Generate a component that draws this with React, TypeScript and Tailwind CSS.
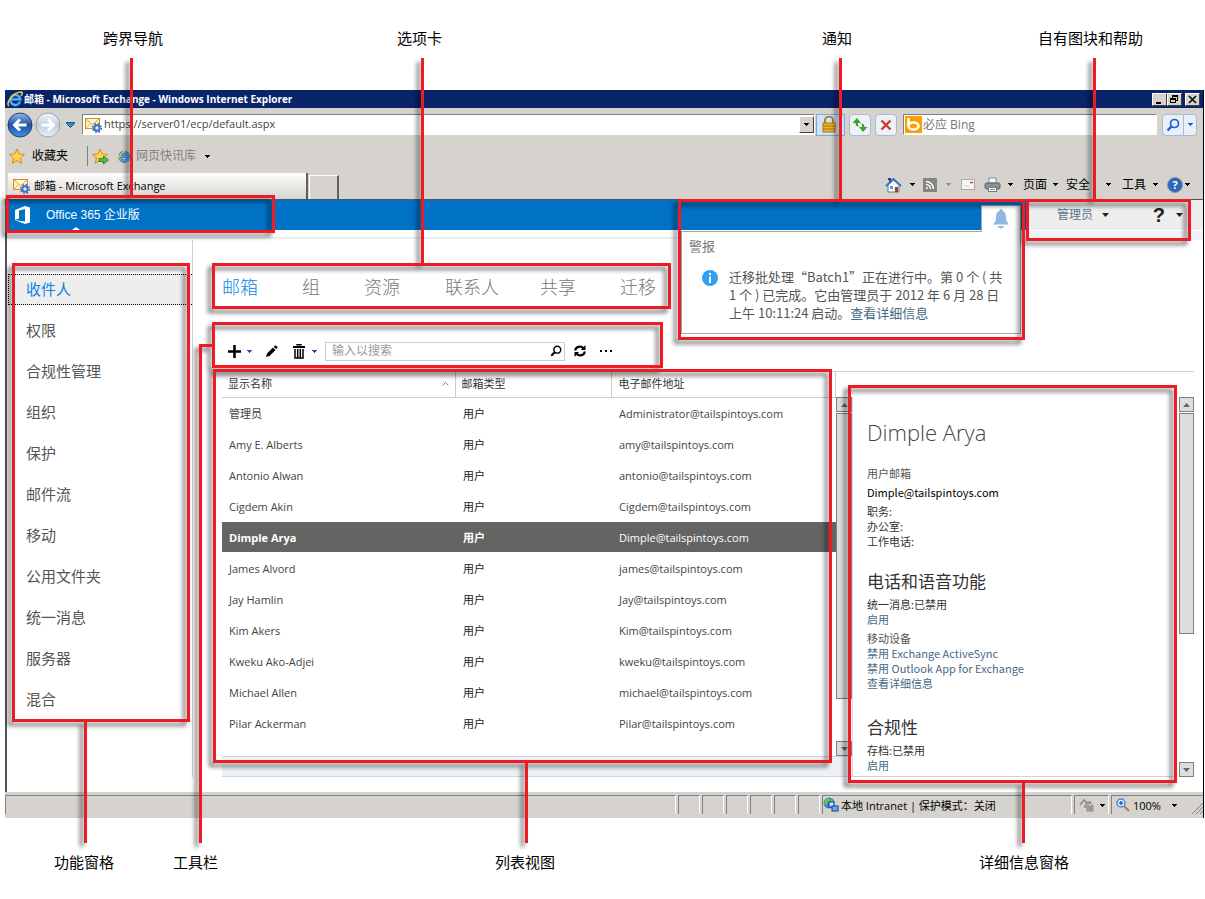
import type { ReactNode } from 'react';

const NAV_ITEMS = ['收件人', '权限', '合规性管理', '组织', '保护', '邮件流', '移动', '公用文件夹', '统一消息', '服务器', '混合'];

const TABS = [
  { label: '邮箱', width: 'w-20' },
  { label: '组', width: 'w-[62px]' },
  { label: '资源', width: 'w-[81px]' },
  { label: '联系人', width: 'w-[95px]' },
  { label: '共享', width: 'w-20' },
  { label: '迁移', width: 'w-10' },
];

const MAILBOXES = [
  { name: '管理员', email: 'Administrator@tailspintoys.com' },
  { name: 'Amy E. Alberts', email: 'amy@tailspintoys.com' },
  { name: 'Antonio Alwan', email: 'antonio@tailspintoys.com' },
  { name: 'Cigdem Akin', email: 'Cigdem@tailspintoys.com' },
  { name: 'Dimple Arya', email: 'Dimple@tailspintoys.com', selected: true },
  { name: 'James Alvord', email: 'james@tailspintoys.com' },
  { name: 'Jay Hamlin', email: 'Jay@tailspintoys.com' },
  { name: 'Kim Akers', email: 'Kim@tailspintoys.com' },
  { name: 'Kweku Ako-Adjei', email: 'kweku@tailspintoys.com' },
  { name: 'Michael Allen', email: 'michael@tailspintoys.com' },
  { name: 'Pilar Ackerman', email: 'Pilar@tailspintoys.com' },
];

function Caret({ className = 'text-black' }: { className?: string }) {
  return (
    <svg viewBox="0 0 5 3" className={`w-[5px] h-[3px] shrink-0 ${className}`} fill="currentColor" shapeRendering="crispEdges">
      <path d="M0 0h5L2.500 3z" />
    </svg>
  );
}

function IeIcon({ className }: { className: string }) {
  return (
    <svg viewBox="0 0 16 16" className={className} fill="none">
      <path d="M13 10.700A5 5 0 1 1 13.300 8.300H4" stroke="#1668c4" strokeWidth="3.400" />
      <path d="M13 10.700A5 5 0 1 1 13.300 8.300H4" stroke="#5db4f5" strokeWidth="1.800" />
      <path d="M2 15C-1.500 12 6 1 14.500 1c1.500.5.5 2.500-.5 4" stroke="#f5c542" strokeWidth="1.500" />
    </svg>
  );
}

function MailGearIcon() {
  return (
    <svg viewBox="0 0 17 16" className="w-[17px] h-4 shrink-0">
      <rect x="0.500" y="1.500" width="14" height="10" fill="#fdeebb" stroke="#c9922a" />
      <path d="M1 2l6.500 5.500L14 2" fill="#fff8dc" stroke="#d9a441" />
      <path d="M1 11l4.500-4.500M14 11L9.500 6.500" fill="none" stroke="#e2bd6a" />
      <circle cx="12" cy="11" r="4.300" fill="none" stroke="#2a5db0" strokeWidth="1.400" strokeDasharray="1.700 1.700" />
      <circle cx="12" cy="11" r="2.700" fill="#dbe8fb" stroke="#3f74c8" strokeWidth="2" />
    </svg>
  );
}

function Star({ arrow }: { arrow?: boolean }) {
  return (
    <svg viewBox="0 0 17 17" className="w-[17px] h-[17px] shrink-0">
      <path d="M8 1l2.200 4.900 5.300.5-4 3.600 1.200 5.300L8 12.500l-4.700 2.800L4.500 10l-4-3.600 5.300-.5z" fill="#ffd34d" stroke="#d98a1b" />
      {arrow && <path d="M7 10.500h4.500V8l5 4-5 4v-2.500H7z" fill="#4cc24c" stroke="#1e7d25" strokeWidth="0.800" />}
    </svg>
  );
}

function NavArrow({ forward }: { forward?: boolean }) {
  return (
    <svg viewBox="0 0 26 26" className="w-[26px] h-[26px]">
      <defs>
        <linearGradient id={forward ? 'fwd' : 'back'} x1="0" y1="0" x2="0" y2="1">
          <stop offset="0" stopColor={forward ? '#f5f8fc' : '#8fbdf0'} />
          <stop offset="0.500" stopColor={forward ? '#c3cedd' : '#1d4f9c'} />
          <stop offset="1" stopColor={forward ? '#e8eef7' : '#3f94e8'} />
        </linearGradient>
      </defs>
      <circle cx="13" cy="13" r="12" fill={forward ? 'url(#fwd)' : 'url(#back)'} stroke={forward ? '#98a4b5' : '#27406b'} />
      {forward
        ? <path d="M6.500 13h11M13 7.500l5.500 5.500-5.500 5.500" fill="none" stroke="#fff" strokeWidth="3" />
        : <path d="M19.500 13h-11M13 7.500L7.500 13l5.500 5.500" fill="none" stroke="#fff" strokeWidth="3" />}
    </svg>
  );
}

function Magnifier({ className, color }: { className: string; color: string }) {
  return (
    <svg viewBox="0 0 14 14" className={className} fill="none" stroke={color}>
      <circle cx="8.500" cy="5.500" r="4" strokeWidth="1.700" />
      <path d="M5.800 8.200L1.500 12.500" strokeWidth="2.400" />
    </svg>
  );
}

function CaptionButton({ label, children }: { label: string; children: ReactNode }) {
  return (
    <button aria-label={label} className="w-[15px] h-[13px] bg-[#d6d3ce] border border-t-white border-l-white border-r-[#404040] border-b-[#404040]">
      <svg viewBox="0 0 13 11" className="w-[13px] h-[11px]" fill="none" stroke="#000" shapeRendering="crispEdges">{children}</svg>
    </button>
  );
}

function TitleBar() {
  return (
    <div className="h-[18px] bg-[#0a246a] flex items-center pl-[2px] pr-[3px] border-r border-black">
      <IeIcon className="w-4 h-4" />
      <h1 className="flex-1 ml-px text-white text-[10px] font-bold leading-4 whitespace-nowrap">邮箱 - Microsoft Exchange - Windows Internet Explorer</h1>
      <CaptionButton label="最小化"><path d="M3 8.500h5" strokeWidth="2" /></CaptionButton>
      <CaptionButton label="还原">
        <path d="M4.500 4V1.500h5v5H8M4 2h6M2.500 4.500h5v4h-5zM2 5h6" />
      </CaptionButton>
      <span className="w-[3px]" />
      <CaptionButton label="关闭"><path d="M3 2l7 7M10 2L3 9" strokeWidth="1.500" shapeRendering="auto" /></CaptionButton>
    </div>
  );
}

function AddressRow() {
  return (
    <div className="h-[33px] flex items-center pl-[2px] pr-[6px]">
      <button aria-label="后退"><NavArrow /></button>
      <button aria-label="前进" className="ml-[2px]"><NavArrow forward /></button>
      <svg viewBox="0 0 9 6" className="w-[9px] h-[6px] mx-[5px]"><path d="M.5.5h8v1L4.500 5.500.5 1.500z" fill="#2d8fd6" stroke="#174f8a" /></svg>
      <div className="flex-1 h-[21px] ml-[2px] bg-white border border-[#808080] border-r-white border-b-white flex items-center pl-[2px]">
        <MailGearIcon />
        <input aria-label="地址" defaultValue="https://server01/ecp/default.aspx" className="flex-1 min-w-0 ml-[2px] text-[11px] text-[#444] outline-none" />
        <button aria-label="地址列表" className="w-[15px] h-[17px] bg-[#d6d3ce] border border-t-white border-l-white border-r-[#404040] border-b-[#404040] flex items-center justify-center">
          <Caret />
        </button>
      </div>
      <button aria-label="安全报告" className="w-[29px] h-[22px] ml-px bg-[#cfe3fb] border border-[#7da7d9] flex items-center justify-center">
        <svg viewBox="0 0 14 17" className="w-[14px] h-[17px] mr-1">
          <path d="M3 8V4.500a4 4 0 0 1 8 0V8" fill="none" stroke="#a8832a" strokeWidth="2" />
          <rect x="1" y="7" width="12" height="9" fill="#eeb422" stroke="#a8780f" />
          <path d="M1 10h12M1 13h12" stroke="#a8780f" />
        </svg>
      </button>
      <button aria-label="刷新" className="w-[22px] h-[22px] ml-1 bg-[#eef1f8] border border-[#b0b8c8] rounded-sm flex items-center justify-center">
        <svg viewBox="0 0 16 14" className="w-4 h-[14px]" fill="#35a52d">
          <path d="M5 0L.5 5h3c0 2.500 1.200 3.600 3.500 3.600C6 7.600 6 6.500 6 5h3zM11 14l4.500-5h-3c0-2.500-1.200-3.600-3.500-3.600 1 1 1 2.100 1 3.600H7z" />
        </svg>
      </button>
      <button aria-label="停止" className="w-[22px] h-[22px] ml-1 bg-[#eef1f8] border border-[#b0b8c8] rounded-sm flex items-center justify-center">
        <svg viewBox="0 0 12 12" className="w-3 h-3" stroke="#cc3a33" strokeWidth="2.400"><path d="M1.500 1.500l9 9M10.500 1.500l-9 9" /></svg>
      </button>
      <div className="w-[254px] h-[21px] ml-[6px] bg-white border border-[#808080] border-r-white border-b-white flex items-center pl-px">
        <svg viewBox="0 0 17 17" className="w-[17px] h-[17px]">
          <rect width="17" height="17" fill="#ff9c00" />
          <path d="M3.500 2v8" stroke="#fff" strokeWidth="2.600" />
          <ellipse cx="8.500" cy="10" rx="5" ry="3.500" fill="none" stroke="#fff" strokeWidth="2.600" />
        </svg>
        <input aria-label="搜索 Bing" placeholder="必应 Bing" className="flex-1 min-w-0 ml-px text-xs placeholder:text-[#777] outline-none" />
      </div>
      <button aria-label="搜索" className="w-[22px] h-[22px] ml-[5px] bg-[#e8f0fb] border border-[#b0b8c8] rounded-l-sm flex items-center justify-center">
        <Magnifier className="w-[14px] h-[14px]" color="#1f5fd0" />
      </button>
      <button aria-label="搜索选项" className="w-[13px] h-[22px] bg-[#e8f0fb] border border-l-0 border-[#b0b8c8] rounded-r-sm flex items-center justify-center">
        <Caret className="text-[#1f5fd0]" />
      </button>
    </div>
  );
}

function FavoritesRow() {
  return (
    <div className="h-[30px] flex items-center pl-[4px] text-xs">
      <button className="flex items-center gap-[6px]"><Star />收藏夹</button>
      <span className="w-px h-5 bg-[#808080] ml-[19px] mr-1" />
      <button aria-label="添加到收藏夹"><Star arrow /></button>
      <button className="flex items-center gap-[5px] ml-2 text-[#808080]">
        <IeIcon className="w-[14px] h-[14px]" />
        网页快讯库
        <Caret className="text-black ml-1" />
      </button>
    </div>
  );
}

function CommandBar() {
  return (
    <div className="flex items-center text-xs pr-[13px] pb-px">
      <button aria-label="主页" className="flex items-center gap-2">
        <svg viewBox="0 0 17 16" className="w-[17px] h-4">
          <path d="M3 2h2v3" fill="none" stroke="#27408b" strokeWidth="2" />
          <path d="M3 8v7h11V8L8.500 3z" fill="#f4f7fb" stroke="#5c79a8" />
          <path d="M1 9l7.500-7L16 9" fill="none" stroke="#3d6fb5" strokeWidth="1.800" />
          <rect x="5" y="9" width="3" height="3" fill="#6e93c4" /><rect x="10" y="10" width="3" height="5" fill="#8a4b22" />
        </svg>
        <Caret />
      </button>
      <button aria-label="源" className="flex items-center gap-[9px] ml-2">
        <svg viewBox="0 0 14 14" className="w-[14px] h-[14px]" fill="none" stroke="#fff" strokeWidth="1.500">
          <rect width="14" height="14" rx="1" fill="#858585" stroke="none" />
          <circle cx="4" cy="10" r="1" fill="#fff" stroke="none" /><path d="M3 6.500a4.500 4.500 0 0 1 4.500 4.500M3 3.500a7.500 7.500 0 0 1 7.500 7.500" />
        </svg>
        <Caret className="text-[#909090]" />
      </button>
      <button aria-label="阅读邮件" className="ml-[10px]">
        <svg viewBox="0 0 14 11" className="w-[14px] h-[11px]"><rect x=".5" y=".5" width="13" height="10" fill="#f6f6f6" stroke="#aaa" /><path d="M9 3.500h3" stroke="#d33" strokeWidth="1.500" /><path d="M3 7h5" stroke="#ccc" /></svg>
      </button>
      <button aria-label="打印" className="flex items-center gap-[7px] ml-[9px]">
        <svg viewBox="0 0 17 16" className="w-[17px] h-4">
          <path d="M5 1h7v5H5z" fill="#fff" stroke="#888" /><rect x="1" y="6" width="15" height="6" rx="1.500" fill="#8a9098" stroke="#5b6167" />
          <rect x="4.500" y="10.500" width="8" height="4" fill="#fff" stroke="#777" /><path d="M6 12.500h3" stroke="#2aa6a6" /><path d="M9 12.500h2" stroke="#3b3" />
        </svg>
        <Caret />
      </button>
      <button className="flex items-center gap-[6px] ml-[10px]">页面<Caret /></button>
      <button className="flex items-center gap-4 ml-2">安全<Caret /></button>
      <button className="flex items-center gap-[7px] ml-[11px]">工具<Caret /></button>
      <button aria-label="帮助" className="flex items-center gap-[2px] ml-[9px]">
        <span className="w-4 h-4 rounded-full bg-[#2f66bd] border border-[#8b95a5] text-white text-[11px] font-bold leading-[14px]">?</span>
        <Caret />
      </button>
    </div>
  );
}

function TabRow() {
  return (
    <div className="h-[29px] flex items-end border-b border-[#555] pl-[3px]">
      <div className="w-[300px] h-[26px] flex items-center pl-[5px] gap-1 text-[11px] bg-linear-to-b from-white to-[#d6d3ce] border-r-2 border-[#606060]">
        <MailGearIcon />邮箱 - Microsoft Exchange
      </div>
      <button aria-label="新建选项卡" className="w-[30px] h-6 ml-px border-l border-t border-white border-r-2 border-r-[#606060]" />
      <div className="flex-1" />
      <div className="h-[28px] flex items-center"><CommandBar /></div>
    </div>
  );
}

function SuiteHeader() {
  return (
    <header className="flex h-10">
      <div className="flex-1">
        <div className="h-[30px] bg-[#0072c6] flex items-center pl-2 relative font-['Liberation_Sans','Noto_Sans_CJK_SC',sans-serif]">
          <svg viewBox="0 0 16 18" className="w-4 h-[18px]" fill="#fff">
            <path fillRule="evenodd" d="M0 4l10-4 5 1.500v15L10 18 0 14.300l10 1.200V3L4 4.500v8L0 14z" />
          </svg>
          <a href="#" className="ml-[15px] text-xs text-white">Office 365 企业版</a>
          <span className="absolute left-[65px] bottom-0 border-x-4 border-x-transparent border-b-[3px] border-b-white" />
        </div>
        <div className="h-[7px]" />
        <div className="h-[2px] bg-[#ebeff3]" />
      </div>
      <div className="w-[177px]">
        <div className="h-[30px] bg-[#eee] flex items-center pl-[31px] pr-5">
          <button className="flex items-center gap-[9px] text-xs text-[#5a7388]">
            管理员
            <svg viewBox="0 0 7 4" className="w-[7px] h-1"><path d="M0 0h7L3.500 4z" fill="#222" /></svg>
          </button>
          <div className="flex-1" />
          <button aria-label="帮助" className="flex items-center gap-[11px] text-xl leading-5 font-bold text-[#222] font-['Liberation_Sans',sans-serif]">
            ?
            <svg viewBox="0 0 7 4" className="w-[7px] h-1"><path d="M0 0h7L3.500 4z" fill="#222" /></svg>
          </button>
        </div>
        <div className="h-px bg-white" />
        <div className="h-[9px] bg-[#eef2f7]" />
      </div>
    </header>
  );
}

function AlertPopup() {
  return (
    <section className="absolute right-[182px] top-[5px] w-[340px] font-['Noto_Sans_CJK_SC',sans-serif]">
      <div className="relative z-10 w-10 h-[27px] ml-auto bg-white border border-b-0 border-[#a0a6ad] flex items-center justify-center">
        <button aria-label="通知">
          <svg viewBox="0 0 16 20" className="w-4 h-5" fill="#8db8e5">
            <path d="M8 0c1 0 1.500.8 1.500 1.800C12 2.800 13 5 13 8c0 4 1 5 3 7.500H0C2 13 3 12 3 8c0-3 1-5.200 3.500-6.200C6.500.8 7 0 8 0zM5 17h6c-.5 1.800-1.500 2.500-3 2.500S5.500 18.800 5 17z" />
          </svg>
        </button>
      </div>
      <div className="-mt-px bg-white border border-[#a0a6ad] h-[103px] pl-[7px] pt-[5px]">
        <h2 className="text-[13px] leading-[18px] text-[#777]">警报</h2>
        <div className="flex mt-[13px] pl-[13px]">
          <svg viewBox="0 0 16 16" className="w-4 h-4 mt-[2px] shrink-0">
            <circle cx="8" cy="8" r="8" fill="#32a0f0" /><path d="M8 3v2M8 6.500V13" stroke="#fff" strokeWidth="2" />
          </svg>
          <p className="ml-[11px] w-[290px] text-[13px] leading-[18px] text-[#555]">
            迁移批处理“Batch1”正在进行中。第 0 个 ( 共<br />
            1 个 ) 已完成。它由管理员于 2012 年 6 月 28 日<br />
            上午 10:11:24 启动。<a href="#" className="text-[#476a86]">查看详细信息</a>
          </p>
        </div>
      </div>
    </section>
  );
}

function FeaturePane() {
  return (
    <nav className="w-[186px] pt-[29px] border-r border-[#ccd2d6]">
      <ul>
        {NAV_ITEMS.map((item, i) => (
          <li key={item} className="h-[41px] flex items-center pl-px">
            <a
              href="#"
              className={
                i === 0
                  ? 'flex-1 h-[31px] flex items-center pl-[17px] text-[15px] text-[#0a84e8] bg-[#eee] border border-r-0 border-dotted border-black'
                  : 'flex-1 h-[31px] flex items-center pl-[18px] text-[15px] text-[#555]'
              }
            >
              {item}
            </a>
          </li>
        ))}
      </ul>
    </nav>
  );
}

function Toolbar() {
  return (
    <div className="h-[34px] mb-[3px] flex items-center pl-[6px]">
      <button aria-label="新建" className="flex items-center gap-[6px]">
        <svg viewBox="0 0 13 13" className="w-[13px] h-[13px]"><path d="M6.500 0v13M0 6.500h13" stroke="#000" strokeWidth="2.600" /></svg>
        <Caret className="text-[#2f52a0]" />
      </button>
      <button aria-label="编辑" className="ml-[14px]">
        <svg viewBox="0 0 12 12" className="w-3 h-3"><path d="M0 12l1-3.500L7 2.500 9.500 5l-6 6zM7.800 1.700L9 .5c.8-.6 3 1.300 2.500 2.300l-1.200 1.400z" /></svg>
      </button>
      <button aria-label="删除" className="flex items-center gap-[7px] ml-[15px]">
        <svg viewBox="0 0 12 15" className="w-3 h-[15px]" fill="none" stroke="#000">
          <path d="M0 3h12" strokeWidth="2" /><path d="M4 1.500V.7h4v.8" strokeWidth="1.400" />
          <path d="M2 5v9h8V5M4.700 5v9M7.300 5v9" strokeWidth="1.500" />
        </svg>
        <Caret className="text-[#2f52a0]" />
      </button>
      <div className="w-[240px] h-[19px] ml-2 border border-[#c8cfcf] flex items-center">
        <input aria-label="搜索" placeholder="输入以搜索" className="flex-1 min-w-0 pl-[6px] text-xs placeholder:text-[#999] outline-none" />
        <button aria-label="搜索" className="mr-[2px]"><Magnifier className="w-3 h-3" color="#000" /></button>
      </div>
      <button aria-label="刷新" className="ml-[9px]">
        <svg viewBox="0 0 12 12" className="w-3 h-3" fill="none" stroke="#000" strokeWidth="2.200">
          <path d="M1.200 5.500C1.500 2 6.500 0 9.500 3.200M10.800 6.500C10.500 10 5.500 12 2.500 8.800" />
          <path d="M11.500 0v5H6.800zM.5 12V7h4.700z" fill="#000" stroke="none" />
        </svg>
      </button>
      <button aria-label="更多" className="ml-[14px]">
        <svg viewBox="0 0 12 2" className="w-3 h-[2px]" fill="#000"><path d="M0 0h2v2H0zM5 0h2v2H5zM10 0h2v2h-2z" /></svg>
      </button>
    </div>
  );
}

function ScrollArrow({ down }: { down?: boolean }) {
  return (
    <button aria-label={down ? '向下滚动' : '向上滚动'} className="w-full h-[15px] shrink-0 bg-[#dedcde] border border-[#808080] flex items-center justify-center">
      <svg viewBox="0 0 7 4" className="w-[7px] h-1"><path d={down ? 'M0 0h7L3.500 4z' : 'M0 4h7L3.500 0z'} fill="#666" /></svg>
    </button>
  );
}

function MailboxList() {
  return (
    <div className="flex-1 flex flex-col">
      <div className="flex-1 flex">
        <div className="flex-1">
          <table className="w-full table-fixed border-collapse text-left text-[11px] text-[#444]">
            <thead>
              <tr className="h-[25px] border-b border-[#ccc] text-[#333]">
                <th className="w-[233px] h-6 pl-[6px] pr-[6px] font-normal">
                  <span className="flex items-center justify-between">
                    显示名称
                    <svg viewBox="0 0 7 4" className="w-[7px] h-1" fill="none" stroke="#888"><path d="M.5 3.500l3-3 3 3" /></svg>
                  </span>
                </th>
                <th className="w-[156px] pl-[6px] font-normal border-l border-[#ccc]">邮箱类型</th>
                <th className="pl-[7px] font-normal border-l border-r border-[#ccc]">电子邮件地址</th>
              </tr>
            </thead>
            <tbody>
              {MAILBOXES.map((m) => (
                <tr key={m.name} className={m.selected ? 'h-[31px] border-b border-white bg-[#636563] text-white' : 'h-[31px] border-b border-white'}>
                  <td className={m.selected ? 'pl-[7px] pt-1 font-bold' : 'pl-[7px] pt-1'}>{m.name}</td>
                  <td className={m.selected ? 'pl-2 pt-1 font-bold' : 'pl-2 pt-1 text-[#222]'}>用户</td>
                  <td className="pl-2 pt-1">{m.email}</td>
                </tr>
              ))}
            </tbody>
          </table>
        </div>
        <div className="w-4 pt-[25px] flex flex-col">
          <ScrollArrow />
          <div className="flex-1 mt-px mb-[42px] bg-[#dedcde] border border-[#808080]" />
          <ScrollArrow down />
        </div>
      </div>
      <div className="h-[21px] bg-[#edf1f6] border-y border-[#ccd4d9]" />
    </div>
  );
}

function DetailsPane() {
  return (
    <aside className="w-[342px] mt-[25px] flex">
      <div className="flex-1 h-[380px] overflow-hidden border-l border-[#d5d9dc] border-b border-b-[#ccd4d9] pl-[14px] pt-[17px] font-['Noto_Sans_CJK_SC',sans-serif] text-[11px] leading-[15px] text-[#333]">
        <h2 className="font-['Open_Sans',sans-serif] font-light text-[22px] leading-9 text-[#444]">Dimple Arya</h2>
        <p className="mt-4 text-[#555]">用户邮箱</p>
        <p className="mt-1 text-black">Dimple@tailspintoys.com</p>
        <p className="mt-1">职务:</p>
        <p>办公室:</p>
        <p>工作电话:</p>
        <h3 className="mt-5 text-[17px] leading-6">电话和语音功能</h3>
        <p className="mt-1">统一消息:已禁用</p>
        <a href="#" className="block text-[#476a86]">启用</a>
        <p className="mt-1 text-[#555]">移动设备</p>
        <a href="#" className="block text-[#476a86]">禁用 Exchange ActiveSync</a>
        <a href="#" className="block text-[#476a86]">禁用 Outlook App for Exchange</a>
        <a href="#" className="block text-[#476a86]">查看详细信息</a>
        <h3 className="mt-6 text-[17px] leading-6">合规性</h3>
        <p className="mt-1">存档:已禁用</p>
        <a href="#" className="block text-[#476a86]">启用</a>
      </div>
      <div className="w-[15px] ml-[6px] flex flex-col">
        <ScrollArrow />
        <div className="h-[221px] mt-px bg-[#dedcde] border border-[#808080]" />
        <div className="flex-1" />
        <ScrollArrow down />
      </div>
    </aside>
  );
}

function StatusBar() {
  return (
    <footer className="h-[26px] bg-[#d6d3ce] border-r border-black pt-[3px] pb-1 flex text-[11px] leading-[17px] text-black">
      <div className="flex-1 border-t border-l border-[#808080] border-r border-r-white" />
      {[0, 1, 2, 3, 4, 5].map((n) => (
        <div key={n} className="w-[22px] ml-[2px] border-t border-l border-[#808080] border-r border-r-white" />
      ))}
      <div className="w-[250px] ml-[2px] border-t border-l border-[#808080] border-r border-r-white flex items-center gap-[2px]">
        <svg viewBox="0 0 16 16" className="w-4 h-4">
          <circle cx="6" cy="6" r="5.500" fill="#2f8bd8" /><path d="M2 3c2-2 5-2 5 0S4 5 4 7s-3 0-3-1zM8 2l3 3-2 4-2-3z" fill="#6cc24a" />
          <rect x="6" y="5" width="5" height="5" fill="#cfe2ff" stroke="#123c8c" /><rect x="9" y="9" width="6" height="5" fill="#6fa8f5" stroke="#123c8c" />
        </svg>
        本地 Intranet | 保护模式：关闭
      </div>
      <button aria-label="保护模式" className="w-[35px] ml-[2px] border-t border-l border-[#808080] border-r border-r-white flex items-center justify-center gap-[5px]">
        <svg viewBox="0 0 16 14" className="w-4 h-[14px]" fill="none" stroke="#909090">
          <path d="M1 7l4-5 3 3M6 10c0-4 2-6 6-6" strokeWidth="1.800" /><path d="M9 8V7a2 2 0 0 1 4 0v1" /><rect x="8" y="8" width="6" height="5" fill="#999" />
        </svg>
        <Caret />
      </button>
      <button className="w-[92px] ml-[2px] pl-1 border-t border-l border-[#808080] flex items-center gap-[3px]">
        <svg viewBox="0 0 14 14" className="w-[14px] h-[14px]" fill="none">
          <circle cx="5" cy="5" r="4" fill="#d8ebff" stroke="#4a86d8" strokeWidth="1.500" /><path d="M3 5h4M5 3v4" stroke="#1f5fd0" strokeWidth="1.500" /><path d="M8 8l5 5" stroke="#a88450" strokeWidth="2.200" />
        </svg>
        100%
        <Caret className="text-black ml-2" />
        <svg viewBox="0 0 12 12" className="w-3 h-3 ml-auto self-end" stroke="#808080"><path d="M1 12L12 1M5 12l7-7M9 12l3-3" /></svg>
      </button>
    </footer>
  );
}

/* Red frames, leader lines and captions that lie over the browser window */
function Callouts() {
  const frame = 'absolute border-[3px] border-[#ed1c24]';
  const line = 'absolute w-[3px] bg-[#ed1c24]';
  const caption = 'absolute text-[15px] leading-5 text-black whitespace-nowrap';
  return (
    <div className="absolute inset-0 z-20 pointer-events-none">
      <div className="absolute inset-0 drop-shadow-[-4px_4px_2px_rgba(0,0,0,0.55)]">
        <div className={`${frame} left-[6px] top-[195px] w-[269px] h-[38px]`} />
        <div className={`${line} left-[130px] top-[58px] h-[138px]`} />
        <div className={`${frame} left-[212px] top-[263px] w-[459px] h-[46px]`} />
        <div className={`${line} left-[421px] top-[58px] h-[206px]`} />
        <div className={`${frame} left-[212px] top-[322px] w-[451px] h-[46px]`} />
        <div className="absolute left-[199px] top-[344px] w-[14px] h-[499px] border-l-[3px] border-t-[3px] border-[#ed1c24]" />
        <div className={`${frame} left-[213px] right-[373px] top-[369px] h-[394px]`} />
        <div className={`${line} left-[525px] top-[762px] h-[81px]`} />
        <div className={`${frame} right-[28px] top-[385px] w-[329px] h-[398px]`} />
        <div className={`${line} right-[180px] top-[782px] h-[61px]`} />
        <div className={`${frame} right-[180px] top-[199px] w-[347px] h-[141px]`} />
        <div className={`${line} right-[363px] top-[58px] h-[142px]`} />
        <div className={`${frame} right-[14px] top-[199px] w-[165px] h-[42px]`} />
        <div className={`${line} right-[109px] top-[58px] h-[142px]`} />
        <div className={`${frame} left-[12px] top-[263px] w-[178px] h-[459px]`} />
        <div className={`${line} left-[84px] top-[721px] h-[122px]`} />
      </div>
      <span className={`${caption} left-[103px] top-[28px]`}>跨界导航</span>
      <span className={`${caption} left-[397px] top-[28px]`}>选项卡</span>
      <span className={`${caption} right-[353px] top-[28px]`}>通知</span>
      <span className={`${caption} right-[62px] top-[28px]`}>自有图块和帮助</span>
      <span className={`${caption} left-[54px] top-[852px]`}>功能窗格</span>
      <span className={`${caption} left-[173px] top-[852px]`}>工具栏</span>
      <span className={`${caption} left-[495px] top-[852px]`}>列表视图</span>
      <span className={`${caption} right-[136px] top-[852px]`}>详细信息窗格</span>
    </div>
  );
}

export default function App() {
  return (
    <div lang="zh-CN" className="relative min-h-screen bg-white pt-[90px] pb-20 pl-[5px] pr-px font-['Open_Sans','Noto_Sans_CJK_SC',sans-serif]">
      <TitleBar />
      <div className="bg-[#d6d3ce] border-r border-black">
        <AddressRow />
        <FavoritesRow />
        <TabRow />
      </div>

      <div className="relative border-l-2 border-l-[#555] border-r border-r-black pb-[15px]">
        <SuiteHeader />
        <AlertPopup />
        <div className="flex">
          <FeaturePane />
          <main className="flex-1 pl-[29px] pr-[9px]">
            <div className="h-[94px] flex items-center">
              {TABS.map((tab, i) => (
                <a key={tab.label} href="#" className={`${tab.width} text-lg font-light ${i === 0 ? 'text-[#0a84e8]' : 'text-[#777]'}`}>
                  {tab.label}
                </a>
              ))}
            </div>
            <Toolbar />
            <div className="flex border-t border-[#ccd2d2]">
              <MailboxList />
              <DetailsPane />
            </div>
          </main>
        </div>
      </div>

      <StatusBar />
      <Callouts />
    </div>
  );
}
